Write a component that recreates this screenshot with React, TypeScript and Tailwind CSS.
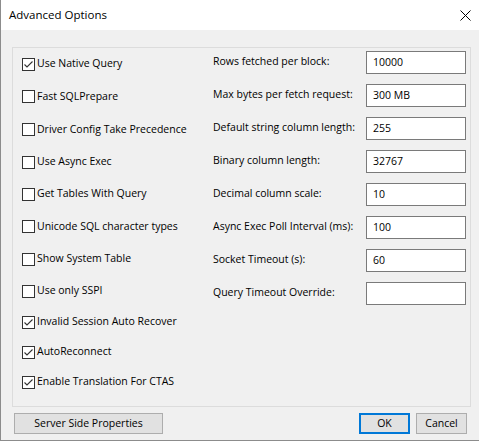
import React from "react";

const checks: { label: string; checked: boolean; h: string }[] = [
  { label: "Use Native Query", checked: true, h: "h-[32px]" },
  { label: "Fast SQLPrepare", checked: false, h: "h-[33px]" },
  { label: "Driver Config Take Precedence", checked: false, h: "h-[33px]" },
  { label: "Use Async Exec", checked: false, h: "h-[32px]" },
  { label: "Get Tables With Query", checked: false, h: "h-[32px]" },
  { label: "Unicode SQL character types", checked: false, h: "h-[33px]" },
  { label: "Show System Table", checked: false, h: "h-[32px]" },
  { label: "Use only SSPI", checked: false, h: "h-[32px]" },
  { label: "Invalid Session Auto Recover", checked: true, h: "h-[30px]" },
  { label: "AutoReconnect", checked: true, h: "h-[30px]" },
  { label: "Enable Translation For CTAS", checked: true, h: "h-[30px]" },
];

const fields: { label: string; value: string }[] = [
  { label: "Rows fetched per block:", value: "10000" },
  { label: "Max bytes per fetch request:", value: "300 MB" },
  { label: "Default string column length:", value: "255" },
  { label: "Binary column length:", value: "32767" },
  { label: "Decimal column scale:", value: "10" },
  { label: "Async Exec Poll Interval (ms):", value: "100" },
  { label: "Socket Timeout (s):", value: "60" },
  { label: "Query Timeout Override:", value: "" },
];

function CheckBox({ checked }: { checked: boolean }) {
  return (
    <div className="w-[13px] h-[13px] border border-[#333333] bg-white flex-none flex items-center justify-center">
      {checked && (
        <svg width="11" height="11" viewBox="0 0 11 11">
          <polyline points="1.5,5.5 4,8 9.5,2.5" fill="none" stroke="#333333" strokeWidth="1.1" />
        </svg>
      )}
    </div>
  );
}

export default function App() {
  return (
    <div className="w-[479px] h-[441px] bg-[#f0f0f0] border-l border-b border-[#8c8c8c] flex flex-col text-[10.5px] text-black font-['Open_Sans','Noto_Sans',sans-serif] overflow-hidden">
      <div className="h-[30px] bg-white flex items-center justify-between pl-[8px] pr-[8px] flex-none">
        <span className="leading-none text-[11.5px]">Advanced Options</span>
        <svg width="11" height="11" viewBox="0 0 11 11">
          <path d="M0.5 0.5 L10.5 10.5 M10.5 0.5 L0.5 10.5" stroke="#000" strokeWidth="1" />
        </svg>
      </div>
      <div className="flex-1 flex flex-col pt-[17px]">
        <div className="ml-[11px] w-[459px] h-[360px] border border-[#dcdcdc] flex flex-none">
          <div className="w-[200px] pl-[9px] flex flex-col">
            {checks.map((c) => (
              <div key={c.label} className={`${c.h} flex items-center`}>
                <CheckBox checked={c.checked} />
                <span className="ml-[2px] whitespace-nowrap">{c.label}</span>
              </div>
            ))}
          </div>
          <div className="flex-1 flex flex-col pt-[3px]">
            {fields.map((f) => (
              <div key={f.label} className="h-[33px] flex items-start">
                <span className="w-[153px] h-[22px] flex items-center whitespace-nowrap">{f.label}</span>
                <div className="w-[100px] h-[23px] bg-white border border-[#7a7a7a] flex items-center pl-[6px]">
                  {f.value}
                </div>
              </div>
            ))}
          </div>
        </div>
        <div className="flex items-center mt-[6px] pl-[13px] pr-[12px]">
          <button className="w-[149px] h-[21px] bg-[#e1e1e1] border border-[#adadad] flex items-center justify-center">
            Server Side Properties
          </button>
          <div className="flex-1" />
          <button className="w-[51px] h-[21px] bg-[#e1e1e1] border-2 border-[#0078d7] flex items-center justify-center">
            OK
          </button>
          <button className="ml-[6px] w-[51px] h-[21px] bg-[#e1e1e1] border border-[#adadad] flex items-center justify-center">
            Cancel
          </button>
        </div>
      </div>
    </div>
  );
}
